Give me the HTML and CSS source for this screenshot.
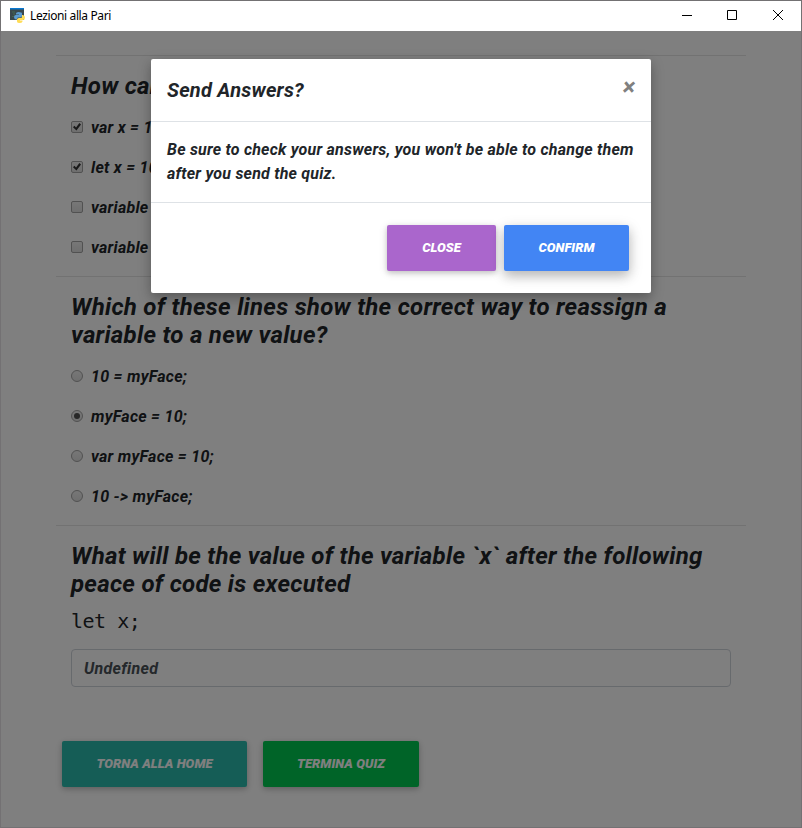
FILE: index.html
```
<!DOCTYPE html>
<html lang="en">
<head>
<meta charset="utf-8">
<title>Lezioni alla Pari</title>
<link rel="stylesheet" href="styles.css">
</head>
<body>
<div class="window">
  <header class="titlebar">
    <svg class="app-icon" width="16" height="16" viewBox="0 0 16 16">
      <path fill="#39474c" d="M0 0h14v12H0z"/><path fill="#0878d1" d="M0 0h14v1.500H0z"/>
      <path stroke="#477653" stroke-width=".7" d="M2 4h3M3 6h2M2 8.500h2"/>
      <path fill="#5b9bd0" d="M6 5.500Q6 4 8.500 4Q12 4 12 5.500V8Q12 9.500 10 9.500H8Q7 9.500 7 11.500H6Q4 11 4 9Q4 7 6 7H9V6.500H6z"/>
      <path fill="#ffdc55" d="M12 7H13Q15 7.500 15 9.500Q15 12 13 12H10V12.500H12.500V13.500Q12 15 9.500 15Q7 15 7 13.500V11.500Q7 10 9 10H11Q12 10 12 8.500z"/>
    </svg>
    <span class="caption">Lezioni alla Pari</span>
    <div class="controls">
      <svg width="46" height="30" viewBox="0 0 46 30"><path d="M19 14.500h10"/></svg>
      <svg width="46" height="30" viewBox="0 0 46 30"><path d="M18.500 9.500h9v9h-9z"/></svg>
      <svg width="46" height="30" viewBox="0 0 46 30"><path d="M18 9l10 10M28 9l-10 10"/></svg>
    </div>
  </header>
  <main class="page">
    <form class="quiz">
      <section class="question">
        <h4>How can</h4>
        <label class="option"><input type="checkbox" checked><span>var x = 10;</span></label>
        <label class="option"><input type="checkbox" checked><span>let x = 10;</span></label>
        <label class="option"><input type="checkbox"><span>variable x = 10;</span></label>
        <label class="option"><input type="checkbox"><span>variable = 10;</span></label>
      </section>
      <section class="question">
        <h4>Which of these lines show the correct way to reassign a<br>variable to a new value?</h4>
        <label class="option"><input type="radio" name="assign"><span>10 = myFace;</span></label>
        <label class="option"><input type="radio" name="assign" checked><span>myFace = 10;</span></label>
        <label class="option"><input type="radio" name="assign"><span>var myFace = 10;</span></label>
        <label class="option"><input type="radio" name="assign"><span>10 -&gt; myFace;</span></label>
      </section>
      <section class="question">
        <h4>What will be the value of the variable `x` after the following<br>peace of code is executed</h4>
        <code class="snippet">let x;</code>
        <input class="answer" type="text" value="Undefined">
      </section>
      <div class="actions">
        <button type="button" class="btn home">Torna alla home</button>
        <button type="button" class="btn finish">Termina quiz</button>
      </div>
    </form>
    <div class="backdrop">
      <div class="modal" role="dialog">
        <div class="modal-header"><h5>Send Answers?</h5><span class="dismiss">×</span></div>
        <p class="modal-body">Be sure to check your answers, you won't be able to change them<br>after you send the quiz.</p>
        <div class="modal-footer">
          <button type="button" class="btn close">Close</button>
          <button type="button" class="btn confirm">Confirm</button>
        </div>
      </div>
    </div>
  </main>
</div>
</body>
</html>
```
FILE: styles.css
```
* { box-sizing: border-box; }
body { margin: 0; background: #fff; }
.window {
  display: flex; flex-direction: column;
  width: 802px; height: 828px; overflow: hidden;
  border: 1px solid #737173;
  font: italic bold 16px/24px Roboto, sans-serif;
  letter-spacing: .22px;
  color: #212529;
}
.titlebar { display: flex; height: 30px; padding-left: 9px; flex: none; background: #fff; }
.app-icon { margin-top: 7px; }
.caption { margin-left: 4px; font: normal 12px/30px "Noto Sans", sans-serif; letter-spacing: -.38px; color: #000; }
.controls { display: flex; margin-left: auto; }
.controls svg { fill: none; stroke: #000; stroke-width: 1; }
.page { position: relative; flex: 1; }
.quiz { width: 690px; margin: 24px 0 0 55px; }
.question { border-top: 1px solid #e5e5e5; padding: 16px 15px 0; }
.question h4 { margin: 0 0 16px; font-size: 24px; line-height: 28px; letter-spacing: .28px; white-space: nowrap; }
.option { display: flex; align-items: center; height: 24px; margin-bottom: 16px; letter-spacing: .27px; white-space: nowrap; }
.option input {
  appearance: none; display: grid; place-items: center;
  width: 12px; height: 12px; margin: 0 8px 2px 0;
  border: 1px solid #a2a2a2; border-radius: 2px;
  background: linear-gradient(#eee, #dedede);
}
.option input[type="radio"] { border-radius: 50%; }
.option input[type="radio"]:checked::before {
  content: ""; width: 6px; height: 6px; border-radius: 50%; background: #505050;
}
.option input[type="checkbox"]:checked::before {
  content: ""; width: 8px; height: 8px; background: #333;
  clip-path: polygon(0 52%, 18% 34%, 38% 55%, 80% 0, 100% 18%, 43% 94%);
}
.snippet { display: block; height: 31px; margin-top: -8px; margin-bottom: 12px; font: normal 20px/31px "DejaVu Sans Mono", monospace; letter-spacing: -.5px; }
.answer {
  display: block; width: 660px; height: 38px; padding: 6px 12px;
  border: 1px solid #ced4da; border-radius: 4px; background: #fff;
  font: inherit; letter-spacing: .3px; color: #495057;
}
.btn {
  height: 46px; padding: 0; border: 0; border-radius: 2px;
  font: italic 900 13px/20px Roboto, sans-serif; letter-spacing: .06px; text-transform: uppercase; color: #fff;
  box-shadow: 0 2px 5px rgba(0,0,0,.16), 0 2px 10px rgba(0,0,0,.12);
}
.actions { display: flex; gap: 16px; padding: 54px 0 0 6px; }
.home { width: 185px; background: #2bbbad; }
.finish { width: 156px; background: #00c851; }
.backdrop { position: absolute; inset: 0; padding-top: 28px; background: rgba(0,0,0,.5); }
.modal {
  width: 500px; margin-left: 150px; border-radius: 2px; background: #fff;
  box-shadow: 0 5px 11px rgba(0,0,0,.18), 0 4px 15px rgba(0,0,0,.15);
}
.modal-header { display: flex; justify-content: space-between; height: 63px; padding: 16px; border-bottom: 1px solid #dee2e6; }
.modal h5 { margin: 0; font-size: 20px; line-height: 30px; }
.dismiss { font-size: 24px; line-height: 24px; letter-spacing: 0; color: #808080; }
.modal-body { margin: 0; padding: 16px; height: 80px; white-space: nowrap; }
.modal-footer { display: flex; justify-content: flex-end; gap: 8px; height: 91px; padding: 22px; border-top: 1px solid #dee2e6; }
.close { width: 109px; background: #a6c; }
.confirm { width: 125px; background: #4285f4; box-shadow: 0 5px 11px rgba(0,0,0,.18), 0 4px 15px rgba(0,0,0,.15); }
```
